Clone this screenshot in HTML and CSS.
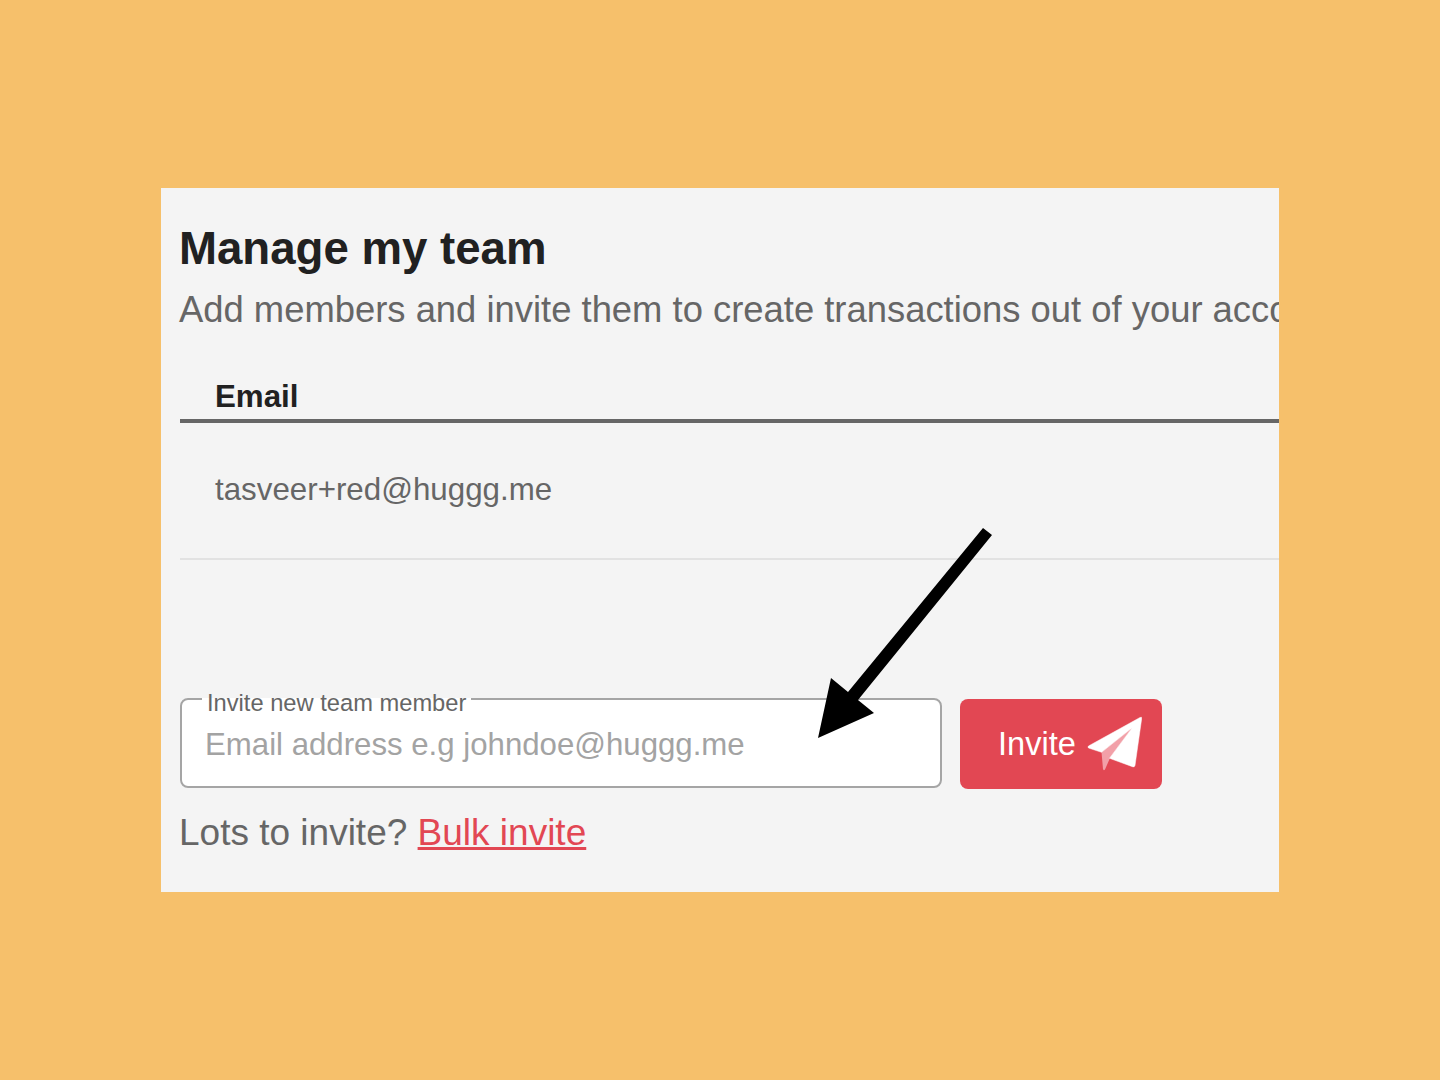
FILE: index.html
```html
<!DOCTYPE html>
<html lang="en">
<head>
<meta charset="utf-8">
<title>Manage my team</title>
<link rel="stylesheet" href="styles.css">
</head>
<body>
<main class="card">
  <h1 class="title">Manage my team</h1>
  <p class="subtitle">Add members and invite them to create transactions out of your account</p>
  <div class="table-head"><span>Email</span></div>
  <div class="table-row"><span>tasveer+red@huggg.me</span></div>
  <div class="invite-row">
    <fieldset class="field">
      <legend class="field-label">Invite new team member</legend>
      <div class="field-placeholder">Email address e.g johndoe@huggg.me</div>
    </fieldset>
    <button class="invite-btn" type="button">
      <span>Invite</span>
      <svg class="plane" viewBox="0 0 56 56" width="56" height="56" aria-hidden="true">
        <path d="M15.500 36 L17 53 Q17.500 55 19 53.500 L24 42 L46 12 Z" fill="#f2a0a8"/>
        <path d="M54 1.500 Q56 0.500 55.700 2.500 L49 49.500 Q48.500 51.500 46.500 50.700 L23.500 42.300 L46 12 L15.500 36.300 L2.500 32 Q1.500 31 2.500 30 Z" fill="#fff" stroke="#fff" stroke-width="0.5" stroke-linejoin="round"/>
      </svg>
    </button>
  </div>
  <p class="bulk">Lots to invite? <a class="bulk-link" href="#">Bulk invite</a></p>
  <svg class="arrow" viewBox="0 0 190 220" width="190" height="220" aria-hidden="true">
    <path d="M174 2 L183 9 L49 174 L65 187 L9 212 L22 152 L39 166 Z" fill="#000"/>
  </svg>
</main>
</body>
</html>
```
FILE: styles.css
```css
* { box-sizing: border-box; }
html, body { margin: 0; height: 100%; }
body {
  background: #f6c06b;
  display: flex;
  align-items: center;
  justify-content: center;
  font-family: "Liberation Sans", Arial, sans-serif;
}
.card {
  position: relative;
  width: 1118px;
  height: 704px;
  background: #f4f4f4;
  padding: 34px 0 0 19px;
  overflow: hidden;
}
.title {
  margin: 0 0 0 -1px;
  font-size: 45.6px;
  line-height: 54px;
  font-weight: 700;
  color: #212121;
}
.subtitle {
  margin: 12px 0 0 -1px;
  font-size: 36.4px;
  line-height: 44px;
  color: #666;
  white-space: nowrap;
}
.table-head {
  margin-top: 44px;
  height: 47px;
  padding: 3px 0 0 35px;
  border-bottom: 4px solid #666;
  font-size: 31.3px;
  line-height: 36px;
  font-weight: 700;
  color: #212121;
}
.table-row {
  height: 137px;
  padding: 49px 0 0 35px;
  border-bottom: 2px solid #e2e2e2;
  font-size: 31.3px;
  line-height: 36px;
  color: #666;
}
.invite-row {
  display: flex;
  gap: 18px;
  margin-top: 139px;
}
.field {
  margin: -17px 0 0;
  width: 762px;
  height: 106px;
  padding: 0 0 0 20px;
  border: 2px solid #a5a5a5;
  border-radius: 8px;
  background: #fff;
}
.field-label {
  padding: 8px 5px 0;
  font-size: 23.7px;
  line-height: 26px;
  color: #666;
}
.field-placeholder {
  padding: 9px 0 0 3px;
  font-size: 31.2px;
  line-height: 40px;
  color: #a3a3a3;
}
.invite-btn {
  width: 202px;
  height: 90px;
  padding: 0 20px 0 38px;
  border: 0;
  border-radius: 8px;
  background: #e24753;
  color: #fff;
  font-family: inherit;
  font-size: 32.6px;
  display: flex;
  align-items: center;
  justify-content: space-between;
}
.plane { display: block; }
.bulk {
  margin: 22px 0 0 -1px;
  font-size: 37px;
  line-height: 44px;
  color: #666;
}
.bulk-link { color: #e24753; }
.arrow {
  position: absolute;
  left: 648px;
  top: 338px;
}
```
